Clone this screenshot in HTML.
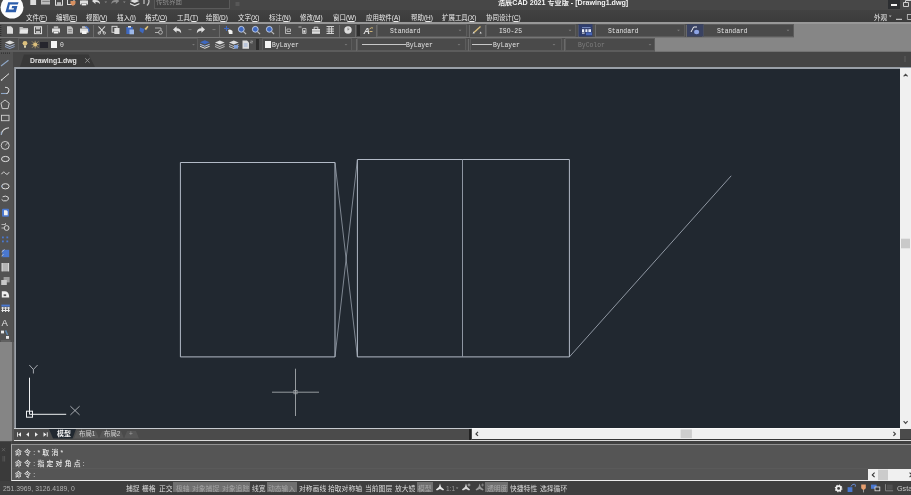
<!DOCTYPE html><html><head><meta charset="utf-8"><title>浩辰CAD 2021 专业版 - [Drawing1.dwg]</title><style>
*{margin:0;padding:0;box-sizing:border-box}
html,body{width:911px;height:495px;overflow:hidden;background:#4a4a4a}
body{position:relative;font-family:"Liberation Sans","Noto Sans CJK SC",sans-serif;color:#e6e6e6;font-size:7px;line-height:1}
.a{position:absolute}
.m,.s,.t,.c,.dt{will-change:transform}
.t{position:absolute;white-space:nowrap;line-height:10px;height:10px}
#title{left:0;top:0;width:911px;height:11px;background:#474747}
#menu{left:0;top:10.3px;width:911px;height:12px;background:linear-gradient(#424242,#3c3c3c)}
#tbline{left:0;top:22.4px;width:911px;height:1.5px;background:#989898}
#tbfill{left:0;top:23.9px;width:911px;height:26.6px;background:#868686}
#tb1{left:0;top:23.9px;width:794px;height:13.1px;background:#4e4e4e}
#tb1b{left:0;top:37px;width:794px;height:1px;background:#767676}
#tb2{left:0;top:38px;width:655px;height:12.5px;background:#4e4e4e}
#tb2b{left:0;top:50.4px;width:655px;height:1.2px;background:#5c5c5c}
#tb2c{left:655px;top:50.2px;width:256px;height:1.4px;background:linear-gradient(#8e8e8e,#6a6a6a)}
#tabs{left:0;top:51.6px;width:911px;height:16.4px;background:#454545}
#left{left:0;top:52px;width:13.3px;height:290px;background:#525252}
#leftfill{left:0;top:342px;width:14.3px;height:99.1px;background:linear-gradient(90deg,#858585 0,#858585 12.2px,#5a5a5a 12.5px,#5a5a5a 100%)}
#cborder{left:14.2px;top:67.3px;width:897px;height:361.7px;background:#9aa0a8;border-left:1.8px solid #8a8e94}
#canvas{left:16px;top:68.5px;width:883.8px;height:359.2px;background:#212830}
#vscroll{left:899.8px;top:68.3px;width:11.2px;height:360.7px;background:#f0f0f0}
#cbot{left:14.2px;top:427.9px;width:458px;height:1.4px;background:#c6cace}
#layout{left:14px;top:429.3px;width:897px;height:11px;background:#4b4b4b}
#laydark{left:471.8px;top:438.8px;width:440px;height:1.3px;background:#363636}
#layline{left:14px;top:439.9px;width:897px;height:1.2px;background:#dcdcdc}
#laygap{left:12px;top:441px;width:899px;height:3px;background:#404040}
#hscroll{left:471.8px;top:428px;width:428px;height:10.8px;background:#f0f0f0;border-top:1px solid #fbfbfb}
#split{left:469px;top:429px;width:2px;height:10.5px;background:#222}
#cmd{left:11px;top:444px;width:900px;height:37px;background:#555;border-top:1px solid #929292;border-left:1px solid #a8a8a8;border-bottom:1px solid #ececec}
#cmdsep{left:12px;top:468px;width:856px;height:1px;background:#5a5a5a}
#cmdscroll{left:868px;top:469px;width:43px;height:12px;background:#f0f0f0}
#grip{left:0;top:442px;width:11px;height:39px;background:#3a3a3a}
#status{left:0;top:481px;width:911px;height:14px;background:#3f3f3f}
.m{position:absolute;top:12.7px;font-size:6.45px;color:#ececec;white-space:nowrap;line-height:10px}
.m u{text-decoration-thickness:0.5px;text-underline-offset:0.5px}
.s{position:absolute;top:483.9px;height:10px;font-size:6.8px;line-height:10px;color:#dcdcdc;white-space:nowrap}
.on{background:#707070;color:#a8a8a8}
.c{position:absolute;left:15.2px;font-size:6.8px;font-weight:500;line-height:10px;color:#f0f0f0;white-space:nowrap;letter-spacing:2.3px;font-family:"Liberation Sans","Noto Sans CJK SC",sans-serif}
.dd{position:absolute;background:#4a4a4a;border:1px solid #5c5c5c}
.dt{position:absolute;white-space:nowrap;font-family:"Liberation Mono",monospace;font-size:6.4px;line-height:10px;color:#e4e4e4}
.sep{position:absolute;width:1px;background:#6a6a6a}
</style></head><body>
<div class="a" id="title"></div>
<div class="a" id="menu"></div>
<div class="a" id="tbline"></div>
<div class="a" id="tbfill"></div>
<div class="a" id="tb1"></div>
<div class="a" id="tb1b"></div>
<div class="a" id="tb2"></div>
<div class="a" id="tb2b"></div>
<div class="a" id="tb2c"></div>
<div class="a" id="tabs"></div>
<div class="a" id="left"></div>
<div class="a" id="leftfill"></div>
<div class="a" id="cborder"></div>
<div class="a" id="canvas"></div>
<div class="a" id="vscroll"></div>
<div class="a" id="cbot"></div>
<div class="a" id="layout"></div>
<div class="a" id="laydark"></div>
<div class="a" id="layline"></div>
<div class="a" id="laygap"></div>
<div class="a" id="hscroll"></div>
<div class="a" id="split"></div>
<div class="a" id="grip"></div>
<div class="a" id="cmd"></div>
<div class="a" id="cmdsep"></div>
<div class="a" id="cmdscroll"></div>
<div class="a" id="status"></div>
<div class="a" style="left:153.5px;top:-2px;width:76px;height:10.5px;background:#3f3f3f;border:1px solid #5a5a5a"></div>
<div class="t" style="left:156px;top:-3.5px;font-size:6.5px;color:#8c8c8c">传统界面</div>
<div class="t" style="left:498px;top:-2.3px;font-size:7.13px;font-weight:bold;color:#f4f4f4" id="ttl">浩辰CAD 2021 专业版 - [Drawing1.dwg]</div>
<div class="a" style="left:888px;top:0;width:12px;height:8.5px;background:#2c2e31"></div>
<div class="a" style="left:891px;top:4.1px;width:5.8px;height:1.5px;background:#f4f4f4"></div>
<div class="a" style="left:904px;top:56.3px;width:2.4px;height:5.8px;background:#525252"></div>
<div class="m" style="left:25.7px">文件(<u>F</u>)</div>
<div class="m" style="left:55.7px">编辑(<u>E</u>)</div>
<div class="m" style="left:85.7px">视图(<u>V</u>)</div>
<div class="m" style="left:116.7px">插入(<u>I</u>)</div>
<div class="m" style="left:144.7px">格式(<u>O</u>)</div>
<div class="m" style="left:176.7px">工具(<u>T</u>)</div>
<div class="m" style="left:205.7px">绘图(<u>D</u>)</div>
<div class="m" style="left:237.7px">文字(<u>X</u>)</div>
<div class="m" style="left:268.7px">标注(<u>N</u>)</div>
<div class="m" style="left:299.7px">修改(<u>M</u>)</div>
<div class="m" style="left:332.7px">窗口(<u>W</u>)</div>
<div class="m" style="left:365.7px">应用软件(<u>A</u>)</div>
<div class="m" style="left:410.7px">帮助(<u>H</u>)</div>
<div class="m" style="left:441.7px">扩展工具(<u>X</u>)</div>
<div class="m" style="left:485.7px">协同设计(<u>C</u>)</div>
<div class="m" style="left:873.8px;font-size:6.6px">外观</div>
<svg class="a" style="left:0;top:52px" width="120" height="16" viewBox="0 0 120 16"><path d="M20 15 L24 2.5 L88.5 2.5 L95 15 Z" fill="#383838"/><path d="M85.2 6.3 l4.4 4.4 m0 -4.4 l-4.4 4.4" stroke="#9a9a9a" stroke-width="0.9" fill="none"/></svg>
<div class="t" style="left:29.6px;top:55.6px;font-size:6.9px;font-weight:bold;color:#e4e4e4" id="tabt">Drawing1.dwg</div>
<div class="dd" style="left:377px;top:24px;width:90px;height:13px"></div>
<div class="dt" style="left:390px;top:26.9px;color:#e4e4e4">Standard</div>
<div class="dd" style="left:486px;top:24px;width:90px;height:13px"></div>
<div class="dt" style="left:499px;top:26.9px;color:#e4e4e4">ISO-25</div>
<div class="dd" style="left:595px;top:24px;width:90px;height:13px"></div>
<div class="dt" style="left:607.7px;top:26.9px;color:#e4e4e4">Standard</div>
<div class="dd" style="left:703px;top:24px;width:91px;height:13px"></div>
<div class="dt" style="left:716.5px;top:26.9px;color:#e4e4e4">Standard</div>
<div class="sep" style="left:47px;top:24.5px;height:12px"></div>
<div class="sep" style="left:93px;top:24.5px;height:12px"></div>
<div class="sep" style="left:166px;top:24.5px;height:12px"></div>
<div class="sep" style="left:219px;top:24.5px;height:12px"></div>
<div class="sep" style="left:279px;top:24.5px;height:12px"></div>
<div class="sep" style="left:339px;top:24.5px;height:12px"></div>
<div class="sep" style="left:355px;top:24.5px;height:12px"></div>
<div class="sep" style="left:376px;top:24.5px;height:12px"></div>
<div class="sep" style="left:468.5px;top:24.5px;height:12px"></div>
<div class="sep" style="left:485px;top:24.5px;height:12px"></div>
<div class="sep" style="left:577.5px;top:24.5px;height:12px"></div>
<div class="sep" style="left:594.5px;top:24.5px;height:12px"></div>
<div class="sep" style="left:686px;top:24.5px;height:12px"></div>
<div class="sep" style="left:702px;top:24.5px;height:12px"></div>
<div class="a" style="left:357px;top:25px;width:3px;height:11px;background:#2e2e2e"></div>
<div class="dd" style="left:18px;top:38px;width:180px;height:13px"></div>
<div class="dt" style="left:60px;top:40.9px;color:#e4e4e4">0</div>
<div class="dd" style="left:262px;top:38px;width:90px;height:13px"></div>
<div class="dt" style="left:272px;top:40.9px;color:#e4e4e4">ByLayer</div>
<div class="dd" style="left:357px;top:38px;width:109px;height:13px"></div>
<div class="dt" style="left:406px;top:40.9px;color:#e4e4e4">ByLayer</div>
<div class="dd" style="left:470px;top:38px;width:92px;height:13px"></div>
<div class="dt" style="left:493px;top:40.9px;color:#e4e4e4">ByLayer</div>
<div class="dd" style="left:565px;top:38px;width:90px;height:13px"></div>
<div class="dt" style="left:578px;top:40.9px;color:#7e7e7e">ByColor</div>
<div class="sep" style="left:356px;top:38.5px;height:12px"></div>
<div class="sep" style="left:468px;top:38.5px;height:12px"></div>
<div class="sep" style="left:563.5px;top:38.5px;height:12px"></div>
<div class="a" style="left:256px;top:39px;width:3px;height:11px;background:#2e2e2e"></div>
<div class="a" style="left:265px;top:41.2px;width:6.2px;height:6.6px;background:#f4f4f4"></div>
<div class="a" style="left:51px;top:41.2px;width:6.2px;height:6.6px;background:#f4f4f4"></div>
<div class="a" style="left:40px;top:41.5px;width:7.6px;height:6px;background:#25252d"></div>
<div class="a" style="left:361.5px;top:44.3px;width:44px;height:0.7px;background:#c8c8c8"></div>
<div class="a" style="left:472px;top:44.3px;width:20px;height:0.7px;background:#c8c8c8"></div>
<svg class="a" style="left:0;top:0" width="911" height="495" viewBox="0 0 911 495">
<g fill="none" stroke="#b2bac6" stroke-width="1">
<path d="M180.4 356.9 V162.5 H335 V356.9"/>
<path d="M357.4 356.9 V159.5 H569.4 V356.9"/>
<path d="M180.4 356.9 H335 M357.4 356.9 H569.4"/>
<line x1="462.5" y1="159.5" x2="462.5" y2="356.9" stroke="#8e96a2"/>
<line x1="335" y1="162.5" x2="357.4" y2="356.9" stroke-width="0.7" stroke="#a8b0bc"/>
<line x1="357.4" y1="159.5" x2="335" y2="356.9" stroke-width="0.7" stroke="#a8b0bc"/>
<line x1="569.4" y1="356.9" x2="731.2" y2="175.8" stroke-width="0.75" stroke="#b4bcc8"/>
</g>
<g stroke="#a4a8ac" stroke-width="0.9" fill="none"><line x1="272" y1="392.2" x2="319" y2="392.2"/><line x1="295.5" y1="368.7" x2="295.5" y2="416"/><rect x="293.9" y="390.6" width="3.2" height="3.2" stroke-width="0.7"/></g>
<g stroke="#eef0f2" stroke-width="1" fill="none"><line x1="29.5" y1="377.7" x2="29.5" y2="414.3"/><line x1="29.5" y1="414.3" x2="66.2" y2="414.3"/><rect x="26.5" y="411.2" width="6" height="6"/></g>
<g stroke="#c8ccd0" stroke-width="0.8" fill="none"><path d="M29.3 365 L33.4 369.5 L37.6 365 M33.4 369.5 L33.4 373.5"/><path d="M70.4 406.2 L79.6 414.9 M79.6 406.2 L70.4 414.9"/></g>
<rect x="30.3" y="-3" width="5.8" height="8" fill="#dedede"/>
<path d="M41 -1 h3 l1 1 h5 v4.5 h-9 z" fill="#bdbdbd"/><path d="M42.3 1.4 h7.5" stroke="#555" stroke-width="0.6"/>
<rect x="55.5" y="-2" width="7" height="7.2" fill="none" stroke="#dedede" stroke-width="1"/><rect x="57" y="2.2" width="4" height="3" fill="#bdbdbd"/>
<rect x="67.5" y="-2" width="6.5" height="6.5" fill="none" stroke="#dedede" stroke-width="1"/><path d="M70.5 1 l5 0 l0 2.5 l-2.5 2.5 l-2.5 -2 z" fill="#d89060"/>
<rect x="80" y="0.5" width="8" height="4" fill="#dedede"/><rect x="81.8" y="-2" width="4.4" height="2.5" fill="#bdbdbd"/><rect x="81.8" y="3.2" width="4.4" height="2.4" fill="#f0f0f0" stroke="#555" stroke-width="0.4"/>
<path d="M92 1 l3.5 -3 v2 q4.5 0 4.5 4 q-1.5 -2.2 -4.5 -2 v2 z" fill="#dedede"/>
<path d="M104.5 1.5 h2.6 l-1.3 1.6 z" fill="#8a8a8a"/>
<path d="M119.3 1 l-3.5 -3 v2 q-4.5 0 -4.5 4 q1.5 -2.2 4.5 -2 v2 z" fill="#8c8c8c"/>
<path d="M123 1.5 h2.6 l-1.3 1.6 z" fill="#8a8a8a"/>
<path d="M130 1 l4.7 -2 l4.7 2 l-4.7 2 z M130 3 l4.7 2 l4.7 -2 v1.2 l-4.7 2 l-4.7 -2 z" fill="#dedede"/>
<path d="M144 -2 v6 M147 -2 q4 3 0 7.5" stroke="#bdbdbd" stroke-width="1.3" fill="none"/>
<path d="M235.5 3 h4 M235.5 5 h4" stroke="#7a7a7a" stroke-width="0.7"/>
<path d="M903.5 2.5 h5 v4 h-5 z M905.5 2.5 v-2 h5.5" fill="none" stroke="#dedede" stroke-width="0.9"/>
<path d="M888.8 15.6 h2.8 l-1.4 1.6 z" fill="#b0b0b0"/>
<path d="M896 19.3 h6" stroke="#dedede" stroke-width="1"/>
<path d="M907 14.5 h5 M907.4 14.5 v5 h4" stroke="#bdbdbd" stroke-width="0.9" fill="none"/>
<circle cx="12" cy="7.2" r="11.4" fill="#fdfdfd"/>
<path d="M8.2 2.2 H18.6 L17.8 4.6 H9.8 L8.6 9.6 H13.6 L14 8.2 H11.6 L12.2 6 H17.4 L15.8 12.2 H5.4 Z" fill="#2b5cab"/>
<path d="M0.7 25 v11" stroke="#2e2e2e" stroke-width="1.2" stroke-dasharray="1 1"/>
<path d="M0.7 39 v11" stroke="#2e2e2e" stroke-width="1.2" stroke-dasharray="1 1"/>
<path d="M7 26.3 h4 l2 2 v5.4 h-6 z" fill="#dedede"/>
<path d="M19.5 27 h3 l1 1 h4.5 v5.6 h-8.5 z" fill="#bdbdbd"/><path d="M20.5 29.6 h7.8 l-1 4 h-7.8z" fill="#e8e8e8"/>
<rect x="34.5" y="26.8" width="7" height="6.8" fill="none" stroke="#dedede" stroke-width="1.1"/><rect x="36" y="27" width="4" height="2.4" fill="#bdbdbd"/><rect x="36" y="31" width="4" height="2.6" fill="#bdbdbd"/>
<rect x="52" y="28.5" width="8" height="4" fill="#dedede"/><rect x="53.8" y="26.3" width="4.4" height="2.2" fill="#bdbdbd"/><rect x="53.8" y="31.2" width="4.4" height="2.6" fill="#f4f4f4" stroke="#555" stroke-width="0.4"/>
<path d="M67 26.3 h4 l2 2 v5.4 h-6 z" fill="#bdbdbd"/><path d="M68.2 29.5 h3.6 M68.2 31.3 h3.6" stroke="#666" stroke-width="0.6"/>
<rect x="80" y="28.5" width="8.5" height="4.2" fill="#dedede"/><rect x="82" y="26.2" width="4.6" height="2.3" fill="#bdbdbd"/><rect x="82" y="31" width="4.6" height="3" fill="#f4f4f4"/><path d="M85 26.5 q4 0.5 4 5" stroke="#3e68c0" stroke-width="1.2" fill="none"/>
<path d="M98.5 26.5 l5.5 6 M105 26.5 l-5.5 6" stroke="#dedede" stroke-width="1.1" fill="none"/><circle cx="99.3" cy="33" r="1.2" fill="none" stroke="#dedede" stroke-width="0.8"/><circle cx="104.3" cy="33" r="1.2" fill="none" stroke="#dedede" stroke-width="0.8"/>
<rect x="112" y="26.3" width="5" height="6" fill="none" stroke="#dedede" stroke-width="0.9"/><rect x="114.3" y="28" width="5.2" height="6" fill="#dedede"/>
<rect x="126.3" y="27" width="6.5" height="7" fill="#3e68c0"/><rect x="128" y="26" width="3" height="1.6" fill="#dedede"/><rect x="129.5" y="29.5" width="4.5" height="4.8" fill="#9db8e8"/>
<path d="M140 27.5 l4.5 1.5 l-1.5 4.5 l-3.5 -2.5 z" fill="#3e68c0"/><path d="M144.5 28.8 l3 -3 l1 1 l-2.5 3.5 z" fill="#dcc07c"/>
<path d="M155 28 h6 v2 M155 32.5 h4" stroke="#bdbdbd" stroke-width="0.9" fill="none"/><circle cx="160.5" cy="32.3" r="1.9" fill="none" stroke="#bdbdbd" stroke-width="0.9"/>
<path d="M173 29.5 l3.6 -3.2 v2 q4.6 0 4.6 5 q-1.5 -2.7 -4.6 -2.5 v2 z" fill="#dedede"/>
<path d="M188.5 29.6 h3" stroke="#8a8a8a" stroke-width="0.8"/>
<path d="M205 29.5 l-3.6 -3.2 v2 q-4.6 0 -4.6 5 q1.5 -2.7 4.6 -2.5 v2 z" fill="#dedede"/>
<path d="M212.5 29.6 h3" stroke="#8a8a8a" stroke-width="0.8"/>
<path d="M226.5 26 v5 M224 28.5 h5" stroke="#3e68c0" stroke-width="1.1"/><path d="M228 30 q2.5 -1.5 4.5 1 v3 h-3.5 z" fill="#f0f0f0"/>
<circle cx="241.3" cy="29.3" r="2.9" fill="#3e68c0" stroke="#c8d4ea" stroke-width="0.9"/><path d="M243.5 31.6 l2.6 2.6" stroke="#bdbdbd" stroke-width="1.2"/>
<circle cx="255.3" cy="29.3" r="2.9" fill="#3e68c0" stroke="#c8d4ea" stroke-width="0.9"/><path d="M257.5 31.6 l2.6 2.6" stroke="#bdbdbd" stroke-width="1.2"/>
<circle cx="269.3" cy="29.3" r="2.9" fill="#3e68c0" stroke="#c8d4ea" stroke-width="0.9"/><path d="M271.5 31.6 l2.6 2.6" stroke="#bdbdbd" stroke-width="1.2"/>
<path d="M285.5 26.5 v7 h5.5 M287 31.5 h3.5 v-2.5 h-3.5z" stroke="#bdbdbd" stroke-width="0.9" fill="none"/>
<path d="M298.5 27 h3 M302.5 28.5 h3.5 v5 h-3.5 z" stroke="#bdbdbd" stroke-width="0.9" fill="none"/><rect x="303.3" y="30.3" width="1.9" height="2.4" fill="#dedede"/>
<path d="M312 29 h8 v4.8 h-8 z" fill="#dedede"/><path d="M314.2 29 v-1.8 h3.6 v1.8" stroke="#dedede" stroke-width="0.9" fill="none"/><path d="M312 31 h8" stroke="#666" stroke-width="0.5"/>
<path d="M326.5 26.5 h7.5 M326.5 29 h7.5 M326.5 31.2 h7.5 M326.5 33.5 h7.5 M329 27 v6.8 M331.6 27 v6.8" stroke="#dedede" stroke-width="0.9" fill="none"/>
<circle cx="348" cy="30" r="3.7" fill="#dedede"/><path d="M348 27.6 v2.6 l1.5 -1.5" stroke="#666" stroke-width="0.7" fill="none"/>
<text x="363.5" y="33.6" font-family="Liberation Sans" font-size="9" font-weight="bold" font-style="italic" fill="#dedede">A</text><path d="M369.5 29 q2 -2 3.5 -1 M369.5 31.5 h3" stroke="#dcc07c" stroke-width="0.9" fill="none"/>
<path d="M474 32.5 l6.5 -6" stroke="#dcc07c" stroke-width="1.3"/><path d="M472.5 33.5 l1.2 -2 l1 2 z M479.5 33.5 l1.2 -2 l1 2 z" fill="#dedede"/>
<rect x="578.5" y="24.2" width="14" height="12.3" fill="#2f3d6c"/><path d="M582 27.6 h8.6" stroke="#8fa6dc" stroke-width="0.8"/><rect x="582" y="29.2" width="2.2" height="2.8" fill="#eef2fa"/><rect x="585.4" y="29.2" width="2" height="2.8" fill="#e4eaf8"/><rect x="588.4" y="29.2" width="2.6" height="2.8" fill="#dfe6f6"/><rect x="582" y="32.6" width="2.6" height="1" fill="#f0f0f0"/><rect x="586" y="32.4" width="6" height="2.8" fill="#4a68b8"/>
<rect x="687" y="24.2" width="16.5" height="12.3" fill="#394262"/><path d="M691 32 l2.6 -5 h3.4" stroke="#f0f0f0" stroke-width="1" fill="none"/><ellipse cx="696.6" cy="32" rx="2.6" ry="2.2" fill="#8ea4e4"/>
<path d="M458.6 29.8 h2.8 l-1.4 1.5 z" fill="#7c7c7c"/>
<path d="M568.6 29.8 h2.8 l-1.4 1.5 z" fill="#7c7c7c"/>
<path d="M677.1 29.8 h2.8 l-1.4 1.5 z" fill="#7c7c7c"/>
<path d="M786.6 29.8 h2.8 l-1.4 1.5 z" fill="#7c7c7c"/>
<path d="M5 42.5 l4.8 -2 l4.8 2 l-4.8 2 z" fill="#dedede"/><path d="M5 44.1 l4.8 2 l4.8 -2 v1 l-4.8 2 l-4.8 -2 z" fill="#a9b7d0"/><path d="M5 46.1 l4.8 2 l4.8 -2 v1 l-4.8 2 l-4.8 -2 z" fill="#8fa3c8"/>
<circle cx="25" cy="43.3" r="2.4" fill="#dcc07c"/><rect x="24" y="45.5" width="2" height="2.2" fill="#d8d0b0"/>
<circle cx="35.2" cy="44.6" r="2" fill="#dcc07c"/><path d="M32 41.4 l6.4 6.4 M38.4 41.4 l-6.4 6.4 M35.2 40.8 v7.6 M31.6 44.6 h7.2" stroke="#dcc07c" stroke-width="0.6"/>
<path d="M200 42.2 l4.8 -2 l4.8 2 l-4.8 2 z" fill="#3e68c0"/><path d="M200 43.800000000000004 l4.8 2 l4.8 -2 v1 l-4.8 2 l-4.8 -2 z" fill="#a9c0ea"/><path d="M200 45.800000000000004 l4.8 2 l4.8 -2 v1 l-4.8 2 l-4.8 -2 z" fill="#dedede"/>
<path d="M215 42.5 l4.8 -2 l4.8 2 l-4.8 2 z" fill="#dedede"/><path d="M215 44.1 l4.8 2 l4.8 -2 v1 l-4.8 2 l-4.8 -2 z" fill="#bdbdbd"/><path d="M215 46.1 l4.8 2 l4.8 -2 v1 l-4.8 2 l-4.8 -2 z" fill="#bdbdbd"/>
<path d="M229 42.5 l4.8 -2 l4.8 2 l-4.8 2 z" fill="#dedede"/><path d="M229 44.1 l4.8 2 l4.8 -2 v1 l-4.8 2 l-4.8 -2 z" fill="#bdbdbd"/><path d="M229 46.1 l4.8 2 l4.8 -2 v1 l-4.8 2 l-4.8 -2 z" fill="#bdbdbd"/>
<rect x="234" y="45" width="4" height="3.6" fill="#7f9fd8"/>
<path d="M242.5 40.5 h4.5 l2 2 v6.3 h-6.5 z" fill="#dedede"/><path d="M243.8 44 h3.8 M243.8 46 h3.8" stroke="#7f9fd8" stroke-width="0.7"/><path d="M250.5 41 h2 v1 h-2 v1 h2.2" stroke="#bdbdbd" stroke-width="0.5" fill="none"/>
<path d="M192.1 44 h2.8 l-1.4 1.5 z" fill="#787878"/>
<path d="M344.6 44 h2.8 l-1.4 1.5 z" fill="#787878"/>
<path d="M457.6 44 h2.8 l-1.4 1.5 z" fill="#787878"/>
<path d="M552.6 44 h2.8 l-1.4 1.5 z" fill="#787878"/>
<path d="M648.6 44 h2.8 l-1.4 1.5 z" fill="#787878"/>
<path d="M1 53.2 h9" stroke="#2e2e2e" stroke-width="1.2" stroke-dasharray="1 1"/>
<path d="M1 66 L8.5 60.2" stroke="#8fa8c8" stroke-width="1.1"/>
<path d="M1.5 80 L9 73.6" stroke="#e0e0e0" stroke-width="1"/><circle cx="1.6" cy="80" r="0.8" fill="#e8e8e8"/>
<path d="M1 93.5 h6.5" stroke="#8fa8c8" stroke-width="1.1"/><path d="M5 87.3 q4.5 0 3.8 3.5 q-0.3 2.7 -2.3 2.7" stroke="#e0e0e0" stroke-width="1" fill="none"/>
<path d="M5 100 L9.2 103.2 L8 108.6 H2.2 L1 103.2 Z" stroke="#d8d8d8" stroke-width="0.9" fill="none"/>
<rect x="1.5" y="115.3" width="7.5" height="5.4" stroke="#d0d0d0" stroke-width="0.9" fill="none"/>
<path d="M1.3 134.8 Q2 128.5 9 127.8" stroke="#d8d8d8" stroke-width="1.1" fill="none"/><path d="M1.3 134.8 v-3" stroke="#8fa8c8" stroke-width="1"/>
<circle cx="5.2" cy="145.4" r="4" stroke="#d8d8d8" stroke-width="0.9" fill="none"/><path d="M5.2 145.4 L8 142.6" stroke="#d8d8d8" stroke-width="0.8"/>
<ellipse cx="5.4" cy="159" rx="3.9" ry="2.6" stroke="#e0e0e0" stroke-width="1" fill="none"/>
<path d="M1.5 174.2 q2 -3.6 3.8 -1 q1.8 2.6 3.8 -1" stroke="#d8d8d8" stroke-width="1" fill="none"/>
<ellipse cx="5.4" cy="186.3" rx="3.7" ry="2.6" stroke="#e0e0e0" stroke-width="1" fill="none"/><circle cx="1.8" cy="186.3" r="0.8" fill="#8fa8c8"/>
<path d="M2.6 196.8 q3 -1.6 5.6 0.4 q1.4 2.4 -1.8 3.6 q-3.6 0.8 -4.8 -1.4" stroke="#d8d8d8" stroke-width="1" fill="none"/>
<rect x="2" y="208.8" width="7" height="8" rx="1" fill="#4a78d0"/><path d="M4 210.3 h2.5 l1.2 1.2 v3.8 h-3.7z" fill="#f0f0f0"/>
<path d="M1.5 224.5 h4 v-1.5" stroke="#d0d0d0" stroke-width="0.8" fill="none"/><circle cx="6.6" cy="228" r="2.4" stroke="#e0e0e0" stroke-width="0.9" fill="none"/><path d="M1.5 228 h3" stroke="#d0d0d0" stroke-width="0.8"/>
<g fill="#4a78d0"><rect x="2" y="236.5" width="1.8" height="1.8"/><rect x="6.4" y="236.5" width="1.8" height="1.8"/><rect x="2" y="240.5" width="1.8" height="1.8"/><rect x="6.4" y="240.5" width="1.8" height="1.8"/></g>
<rect x="2.2" y="249.8" width="7" height="7.4" fill="#4a78d0"/><path d="M1.5 252 l3 -2.5 M1.5 256 l2 -1.5" stroke="#d8d8d8" stroke-width="0.8"/>
<rect x="2" y="263" width="6.6" height="8.4" fill="#b4b4b4"/><path d="M2 263 v8.4 M8.6 263 v8.4" stroke="#e8e8e8" stroke-width="0.9"/>
<rect x="3.6" y="277" width="6" height="5.4" fill="#9c9c9c"/><rect x="1.2" y="280" width="5.6" height="5" fill="#c8c8c8"/>
<path d="M1.8 291.2 h3.4 q4 0.6 4 6.2 h-7.4 z" fill="#f0f0f0"/><rect x="3.6" y="294.3" width="2.6" height="1.8" fill="#555"/>
<rect x="1.4" y="304.6" width="8.4" height="2" fill="#4a78d0"/><path d="M1.4 308 h8.4 M1.4 310.5 h8.4 M2.6 307 v5 M5.6 307 v5 M8.6 307 v5" stroke="#e8e8e8" stroke-width="1.1"/>
<text x="1.6" y="325.8" font-family="Liberation Sans" font-size="9.6" fill="#e4e4e4">A</text>
<rect x="1" y="330.6" width="3" height="2.8" fill="#e8e8e8"/><rect x="6" y="336" width="3" height="2.8" fill="#e8e8e8"/><path d="M5.6 330.4 l2 4.6" stroke="#5a86b0" stroke-width="1.4"/><path d="M1 341 h9.5" stroke="#7a7a7a" stroke-width="0.8"/>
<path d="M903.6 76.4 l2 -2.1 l2 2.1" stroke="#484848" stroke-width="1.2" fill="none"/>
<path d="M903.6 421.2 l2 2.1 l2 -2.1" stroke="#484848" stroke-width="1.2" fill="none"/>
<rect x="901" y="238.7" width="9" height="9.6" fill="#c9c9c9"/>
<path d="M478 431.9 l-2 2 l2 2" stroke="#404040" stroke-width="1.2" fill="none"/>
<path d="M893.4 431.9 l2 2 l-2 2" stroke="#404040" stroke-width="1.2" fill="none"/>
<rect x="680.6" y="429.4" width="11.3" height="8.8" fill="#cdcdcd"/>
<path d="M874.6 472.6 l-2.3 2.3 l2.3 2.3" stroke="#303030" stroke-width="1.1" fill="none"/>
<rect x="878" y="469.7" width="10" height="10.5" fill="#cbcbcb"/>
<path d="M909.6 472.6 l2.3 2.3 l-2.3 2.3" stroke="#303030" stroke-width="1.1" fill="none"/>
<path d="M2 448.2 l3 3 M5 448.2 l-3 3" stroke="#6a6a6a" stroke-width="0.8"/>
<path d="M3 456 v5.5 M4.6 456 v5.5" stroke="#686868" stroke-width="0.6"/>
<path d="M440 483.6 l1.1 3.4 l3 2.6 l-1 1 l-3.1 -1.6 l-3.1 1.6 l-1 -1 l3 -2.6 z" fill="#e8e8e8"/>
<path d="M455.8 487.6 h2.6 l-1.3 1.5 z" fill="#9a9a9a"/>
<path d="M466 483.6 l1.1 3.4 l3 2.6 l-1 1 l-3.1 -1.6 l-3.1 1.6 l-1 -1 l3 -2.6 z" fill="#d8d8d8"/>
<path d="M469 483.5 v3 M467.5 485 h3" stroke="#d8d8d8" stroke-width="0.6"/>
<path d="M479.6 483.6 l1.1 3.4 l3 2.6 l-1 1 l-3.1 -1.6 l-3.1 1.6 l-1 -1 l3 -2.6 z" fill="#9a9a9a"/>
<path d="M482.6 483.5 v3 M481.1 485 h3" stroke="#9a9a9a" stroke-width="0.6"/>
<circle cx="838.6" cy="488.4" r="2.3" fill="none" stroke="#f0f0f0" stroke-width="1.7"/><circle cx="838.6" cy="488.4" r="3.3" fill="none" stroke="#f0f0f0" stroke-width="1.1" stroke-dasharray="1.2 1.39"/>
<rect x="847.6" y="487.2" width="4.8" height="4.8" fill="#4a78d0"/><path d="M851 486.5 q1 -2.6 3.6 -2.4 q1.4 0.8 0.6 2.6" stroke="#6a8ed8" stroke-width="1" fill="none"/>
<path d="M861.2 484.4 h4.6 v3.8 l-2.3 2 l-2.3 -2 z" fill="#e8a070"/><path d="M863.5 490 v2.4" stroke="#c8c8c8" stroke-width="0.7"/>
<rect x="871" y="484.6" width="5.6" height="4.2" fill="#4a78d0"/><rect x="875" y="487" width="4.8" height="3.8" fill="#3a3a3a" stroke="#e0e0e0" stroke-width="0.8"/>
<path d="M885.5 484.2 v6.6 h7.6" stroke="#8a8a8a" stroke-width="0.9" fill="none"/><rect x="887" y="484.6" width="5.6" height="5" fill="#505050"/>
</svg>
<svg class="a" style="left:14px;top:429px" width="160" height="11" viewBox="14 429 160 11"><path d="M49 429 L53 438.5 L72.5 438.5 L76 429 Z" fill="#212830"/><path d="M74 438.5 L77 431 L96 431 L99 438.5 Z" fill="#575757"/><path d="M99 438.5 L102 431 L121 431 L124 438.5 Z" fill="#575757"/><path d="M124 438.5 L127 431 L136 431 L139 438.5 Z" fill="#575757"/><g fill="#f0f0f0"><rect x="17" y="432.3" width="0.9" height="4.4"/><path d="M21 432.3 L21 436.7 L18.2 434.5 Z"/><path d="M29 432.3 L29 436.7 L26.2 434.5 Z"/><path d="M35 432.3 L35 436.7 L37.9 434.5 Z"/><path d="M43.5 432.3 L43.5 436.7 L46.4 434.5 Z"/><rect x="46.8" y="432.3" width="0.9" height="4.4"/></g></svg>
<div class="t" style="left:57px;top:429.2px;font-size:6.9px;font-weight:bold;color:#f4f4f4">模型</div>
<div class="t" style="left:78.5px;top:429.2px;font-size:6.4px;color:#d0d0d0">布局1</div>
<div class="t" style="left:103.8px;top:429.2px;font-size:6.4px;color:#d0d0d0">布局2</div>
<div class="t" style="left:129px;top:429.3px;font-size:6.6px;color:#a0a0a0">+</div>
<div class="c" style="top:447.5px">命令:*取消*</div>
<div class="c" style="top:458.5px">命令:指定对角点:</div>
<div class="c" style="top:469.8px">命令:</div>
<div class="s" style="left:2.7px;color:#b2b2b2;font-size:6.8px" id="coord">251.3969, 3126.4189, 0</div>
<div class="s" style="left:125.6px">捕捉</div>
<div class="s" style="left:142px">栅格</div>
<div class="s" style="left:158.6px">正交</div>
<div class="a" style="left:173.4px;top:481.6px;width:76.6px;height:10.4px;background:#707070"></div>
<div class="s" style="left:176px;color:#a4a4a4">极轴</div>
<div class="a" style="left:190.5px;top:481.6px;width:0.5px;height:10.4px;background:#707070"></div>
<div class="s" style="left:192px;color:#a4a4a4">对象捕捉</div>
<div class="a" style="left:220.5px;top:481.6px;width:0.5px;height:10.4px;background:#707070"></div>
<div class="s" style="left:222px;color:#a4a4a4">对象追踪</div>
<div class="s" style="left:251.6px">线宽</div>
<div class="a" style="left:266.5px;top:481.6px;width:30.100000000000023px;height:10.4px;background:#707070"></div>
<div class="s" style="left:268.3px;color:#a4a4a4">动态输入</div>
<div class="s" style="left:298.6px">对称画线</div>
<div class="s" style="left:328px">拾取对称轴</div>
<div class="s" style="left:365.3px">当前图层</div>
<div class="s" style="left:395.2px">放大镜</div>
<div class="a" style="left:416.7px;top:481.6px;width:16.100000000000023px;height:10.4px;background:#707070"></div>
<div class="s" style="left:418px;color:#a4a4a4">模型</div>
<div class="a" style="left:485px;top:481.6px;width:23px;height:10.4px;background:#707070"></div>
<div class="s" style="left:486.5px;color:#a4a4a4">透明度</div>
<div class="s" style="left:510px">快捷特性</div>
<div class="s" style="left:540px">选择循环</div>
<div class="s" style="left:446.4px;color:#9a9a9a;font-size:6.5px">1:1</div>
<div class="s" style="left:897px;color:#c8c8c8;font-size:7.2px">Gstar</div>
</body></html>
